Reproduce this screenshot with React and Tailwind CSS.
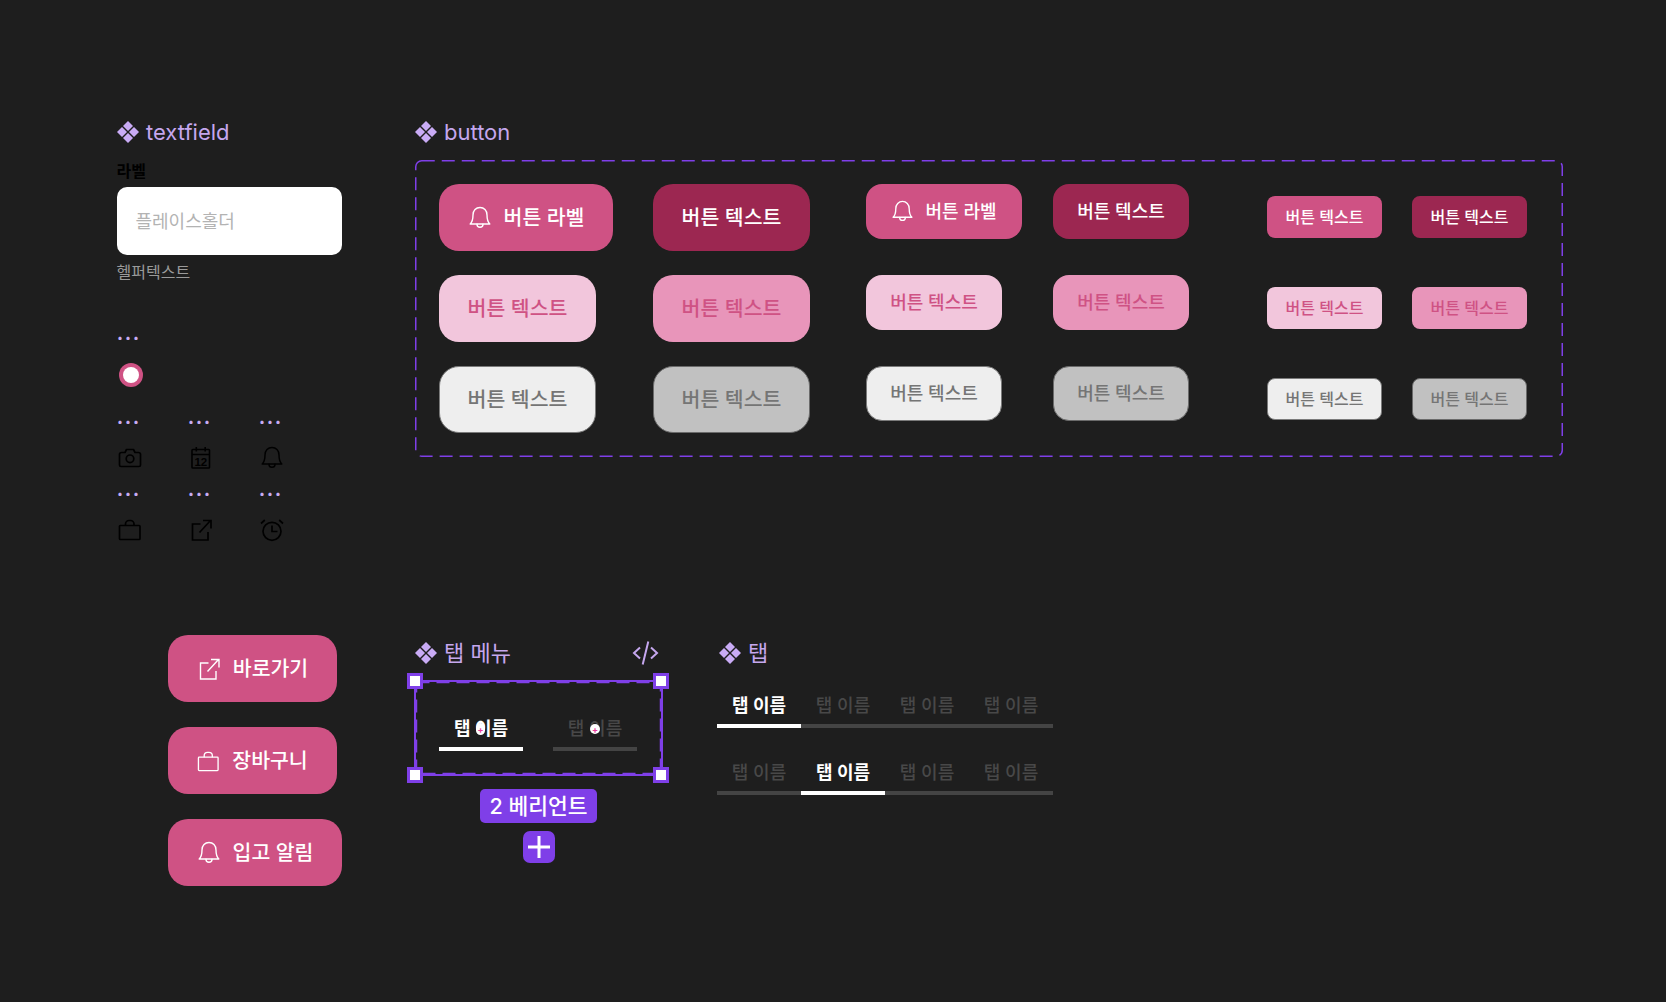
import React from 'react';

// --- Iconos ---
function Diamonds({ className }) {
  return (
    <svg viewBox="0 0 22 22" className={className} fill="currentColor">
      <path d="M11 0 16 5 11 10 6 5Z" />
      <path d="M5 6 10 11 5 16 0 11Z" />
      <path d="M17 6 22 11 17 16 12 11Z" />
      <path d="M11 12 16 17 11 22 6 17Z" />
    </svg>
  );
}

function Bell({ className, sw = 1.6 }) {
  return (
    <svg viewBox="0 0 24 24" className={className} fill="none" stroke="currentColor" strokeWidth={sw} strokeLinejoin="round" strokeLinecap="round">
      <path d="M12 1.500c-4 0-7 3-7 7.500 0 4.500-.8 7-2.800 9h19.600c-2-2-2.800-4.500-2.800-9 0-4.500-3-7.500-7-7.500Z" />
      <path d="M9 18.200c0 1.800 1.300 3.100 3 3.100s3-1.300 3-3.100" />
    </svg>
  );
}

function Camera({ className }) {
  return (
    <svg viewBox="0 0 24 24" className={className} fill="none" stroke="currentColor" strokeWidth="1.700" strokeLinejoin="round">
      <path d="M3.500 6.500H7L8.500 3.500h7L17 6.500h3.500a2 2 0 0 1 2 1.500v11a1.500 1.500 0 0 1-1.500 1.500H3a1.500 1.500 0 0 1-1.500-1.500V8a2 2 0 0 1 2-1.500Z" />
      <circle cx="12" cy="12.800" r="3.800" />
    </svg>
  );
}

function Calendar({ className }) {
  return (
    <svg viewBox="0 0 24 24" className={className} fill="none" stroke="currentColor" strokeWidth="1.600">
      <rect x="3" y="3.500" width="17.500" height="18.500" rx="0.800" />
      <path d="M3 8.500H20.500M7.300 1v4.500M16.200 1v4.500" />
      <text x="11.800" y="20" textAnchor="middle" fontSize="11.500" fontWeight="700" fontFamily="Liberation Sans, sans-serif" fill="currentColor" stroke="none">12</text>
    </svg>
  );
}

function Bag({ className, sw = 1.700 }) {
  return (
    <svg viewBox="0 0 24 24" className={className} fill="none" stroke="currentColor" strokeWidth={sw} strokeLinejoin="round">
      <rect x="1.500" y="7.500" width="20.500" height="14" rx="0.800" />
      <path d="M7.500 7.500V6a3.500 3.500 0 0 1 3.500-3.500h1.500A3.500 3.500 0 0 1 16 6v1.500" />
    </svg>
  );
}

function External({ className, sw = 1.700 }) {
  return (
    <svg viewBox="0 0 24 24" className={className} fill="none" stroke="currentColor" strokeWidth={sw}>
      <path d="M11.500 6H3.500v16h15.500v-8" />
      <path d="M10.500 14.500 21.500 2.500M14 2.500h8v8" />
    </svg>
  );
}

function Alarm({ className }) {
  return (
    <svg viewBox="0 0 24 24" className={className} fill="none" stroke="currentColor" strokeWidth="1.700">
      <circle cx="12" cy="13.300" r="9" />
      <path d="M12 7.500v6h5.500M1 5.500 4.800 2M23 5.500 19.200 2" />
    </svg>
  );
}

function CodeTag({ className }) {
  return (
    <svg viewBox="0 0 26 26" className={className} fill="none" stroke="currentColor" strokeWidth="2">
      <path d="M7.500 7.500 1.500 13l6 5.500M18.500 7.500l6 5.500-6 5.500M15.800 1.500 10.200 24.500" />
    </svg>
  );
}

// --- Encabezado de componente ---
function Title({ children, className = '' }) {
  return (
    <div className={`flex h-[26px] items-center gap-[7px] text-[22px] leading-[26px] text-[#c5a7ee] ${className}`}>
      <Diamonds className="h-[22px] w-[22px] shrink-0 text-[#c9abf5]" />
      <span>{children}</span>
    </div>
  );
}

function Dots() {
  return <div className="-ml-[1px] h-4 text-[16px] font-black leading-[7px] tracking-[2px] text-[#c9abf5]">...</div>;
}

// --- Botones ---
const variants = {
  primary: 'bg-[#cf5284] text-white',
  dark: 'bg-[#9c2751] text-white',
  soft: 'bg-[#f2c6dc] text-[#cf5284]',
  softPressed: 'bg-[#e895ba] text-[#cf5284]',
  gray: 'border border-[#7a7a7a] bg-[#eeeeee] text-[#757575]',
  grayPressed: 'border border-[#6a6a6a] bg-[#c1c1c1] text-[#757575]',
};

const sizes = {
  lg: 'h-[67px] rounded-[20px] text-[20.500px] gap-[12px] pt-[1px]',
  md: 'h-[55px] rounded-[16px] text-[18px] gap-[11px]',
  sm: 'h-[42px] rounded-[8px] text-[16px] gap-2',
};

function Btn({ v, s, w, icon, children }) {
  return (
    <div className={`flex items-center justify-center font-medium ${variants[v]} ${sizes[s]} ${w}`}>
      {icon}
      <span>{children}</span>
    </div>
  );
}

const T = '버튼 텍스트';

function ButtonGroup() {
  return (
    <div className="relative mt-[15px] flex h-[297px] w-[1148px] items-start pl-[24px] pt-[24px]">
      {/* Grande */}
      <div className="grid w-[427px] grid-cols-[214px_157px] gap-y-[24px]">
        <Btn v="primary" s="lg" w="w-[174px]" icon={<Bell className="h-6 w-6" sw={1.4} />}>버튼 라벨</Btn>
        <Btn v="dark" s="lg" w="w-[157px]">{T}</Btn>
        <Btn v="soft" s="lg" w="w-[157px]">{T}</Btn>
        <Btn v="softPressed" s="lg" w="w-[157px]">{T}</Btn>
        <Btn v="gray" s="lg" w="w-[157px]">{T}</Btn>
        <Btn v="grayPressed" s="lg" w="w-[157px]">{T}</Btn>
      </div>
      {/* Mediano */}
      <div className="grid w-[401px] grid-cols-[187px_136px] gap-y-[36px]">
        <Btn v="primary" s="md" w="w-[156px]" icon={<Bell className="h-[23px] w-[23px]" sw={1.4} />}>버튼 라벨</Btn>
        <Btn v="dark" s="md" w="w-[136px]">{T}</Btn>
        <Btn v="soft" s="md" w="w-[136px]">{T}</Btn>
        <Btn v="softPressed" s="md" w="w-[136px]">{T}</Btn>
        <Btn v="gray" s="md" w="w-[136px]">{T}</Btn>
        <Btn v="grayPressed" s="md" w="w-[136px]">{T}</Btn>
      </div>
      {/* Pequeño */}
      <div className="mt-[12px] grid grid-cols-[145px_115px] gap-y-[49px]">
        <Btn v="primary" s="sm" w="w-[115px]">{T}</Btn>
        <Btn v="dark" s="sm" w="w-[115px]">{T}</Btn>
        <Btn v="soft" s="sm" w="w-[115px]">{T}</Btn>
        <Btn v="softPressed" s="sm" w="w-[115px]">{T}</Btn>
        <Btn v="gray" s="sm" w="w-[115px]">{T}</Btn>
        <Btn v="grayPressed" s="sm" w="w-[115px]">{T}</Btn>
      </div>
      {/* Trazo discontinuo del component set */}
      <svg className="pointer-events-none absolute inset-0 h-full w-full" fill="none">
        <rect x="0.750" y="0.750" width="1146.500" height="295.500" rx="6" stroke="#7f3fe8" strokeWidth="1.500" strokeDasharray="13 7" />
      </svg>
    </div>
  );
}

// --- Pestañas ---
function Tab({ active, marker }) {
  return (
    <div className="w-[84px]">
      <div className={`relative h-6 text-center text-[18px] leading-6 ${active ? 'font-semibold text-white' : 'font-medium text-[#484848]'}`}>
        탭 이름
        {marker === 'active' && (
          <span className="absolute left-[37px] top-[6px] flex h-[12px] w-[9px] items-center justify-center rounded-full bg-white text-[9px] font-bold leading-none text-[#e8399a]">+</span>
        )}
        {marker === 'idle' && (
          <span className="absolute left-[37px] top-[7px] flex h-[10px] w-[10px] items-center justify-center rounded-full bg-white text-[9px] font-bold leading-none text-[#e8399a]">+</span>
        )}
      </div>
    </div>
  );
}

function Bar({ active }) {
  return <div className={`h-[4px] w-[84px] ${active ? 'bg-white' : 'bg-[#444444]'}`} />;
}

function TabRow({ activeIndex, className }) {
  return (
    <div className={className}>
      <div className="flex">
        {[0, 1, 2, 3].map((i) => <Tab key={i} active={i === activeIndex} />)}
      </div>
      <div className="mt-[6px] flex">
        {[0, 1, 2, 3].map((i) => <Bar key={i} active={i === activeIndex} />)}
      </div>
    </div>
  );
}

function Handle({ className }) {
  return <div className={`absolute h-4 w-4 border-[3px] border-[#7f3fe8] bg-white ${className}`} />;
}

export default function App() {
  const iconClass = 'h-6 w-6 text-black';
  const iconSet = [
    <Camera key="camera" className={iconClass} />,
    <Calendar key="calendar" className={iconClass} />,
    <Bell key="bell" className={iconClass} sw={1.500} />,
    <Bag key="bag" className={iconClass} />,
    <External key="external" className={iconClass} />,
    <Alarm key="alarm" className={iconClass} />,
  ];

  return (
    <div className="relative h-[1002px] w-full overflow-hidden bg-[#1e1e1e] font-['Inter','Noto_Sans_CJK_KR',sans-serif]">
      {/* textfield */}
      <div className="absolute left-[116.500px] top-[119px] w-[225.500px]">
        <Title className="ml-[0.500px]">textfield</Title>
        <div className="mt-[16px] h-5 text-[16px] font-bold leading-5 text-black">라벨</div>
        <div className="mt-[6px] flex h-[68px] items-center rounded-[10px] bg-white pl-[19px] text-[18px] text-[#b3b3b3]">
          플레이스홀더
        </div>
        <div className="mt-[7px] h-5 text-[16px] leading-5 text-[#9a9a9a]">헬퍼텍스트</div>

        <div className="mt-[49px] pl-[1.500px]">
          <Dots />
          <div className="ml-[1px] mt-[16px] flex h-6 w-6 items-center justify-center rounded-full bg-[#cf5284]">
            <div className="h-4 w-4 rounded-full bg-white" />
          </div>
          <div className="mt-[28px] grid grid-cols-[71px_71px_70px] gap-y-[17px]">
            {iconSet.map((icon) => (
              <div key={icon.key}>
                <Dots />
                <div className="mt-[15px]">{icon}</div>
              </div>
            ))}
          </div>
        </div>
      </div>

      {/* button */}
      <div className="absolute left-[415px] top-[119px]">
        <Title>button</Title>
        <ButtonGroup />
      </div>

      {/* botones con icono */}
      <div className="absolute left-[168px] top-[635px] flex flex-col items-start gap-[25px]">
        <Btn v="primary" s="lg" w="w-[169px]" icon={<External className="h-6 w-6" sw={1.400} />}>바로가기</Btn>
        <Btn v="primary" s="lg" w="w-[169px]" icon={<Bag className="h-[23px] w-[23px]" sw={1.400} />}>장바구니</Btn>
        <Btn v="primary" s="lg" w="w-[174px]" icon={<Bell className="h-6 w-6" sw={1.400} />}>입고 알림</Btn>
      </div>

      {/* 탭 메뉴 */}
      <div className="absolute left-[414px] top-[640px] flex w-[249px] flex-col items-center">
        <div className="flex w-full items-center justify-between pr-[4px] pl-[1px]">
          <Title>탭 메뉴</Title>
          <CodeTag className="h-[26px] w-[27px] text-[#c5a7ee]" />
        </div>
        <div className="relative mt-[14px] h-[96px] w-[249px] border-2 border-[#7f3fe8] pl-[23px] pt-[35px]">
          <div className="flex gap-[30px]">
            <div>
              <Tab active marker="active" />
              <div className="mt-[6px]"><Bar active /></div>
            </div>
            <div>
              <Tab marker="idle" />
              <div className="mt-[6px]"><Bar /></div>
            </div>
          </div>
          <svg className="pointer-events-none absolute inset-0 h-full w-full" fill="none">
            <rect x="0.500" y="0.500" width="244" height="91" stroke="#7f3fe8" strokeWidth="1.500" strokeDasharray="13 7" />
          </svg>
          <Handle className="-left-[9px] -top-[9px]" />
          <Handle className="-right-[8px] -top-[9px]" />
          <Handle className="-bottom-[9px] -left-[9px]" />
          <Handle className="-bottom-[9px] -right-[8px]" />
        </div>
        <div className="mt-[13px] flex h-[34px] w-[117px] items-center justify-center rounded-[5px] bg-[#7f3fe8] text-[21.500px] font-medium text-white">
          2 베리언트
        </div>
        <div className="mt-[8px] flex h-8 w-8 items-center justify-center rounded-[7px] bg-[#7f3fe8]">
          <svg viewBox="0 0 24 24" className="h-6 w-6" fill="none" stroke="white" strokeWidth="3"><path d="M12 1v22M1 12h22" /></svg>
        </div>
      </div>

      {/* 탭 */}
      <div className="absolute left-[717px] top-[640px] w-[336px]">
        <Title className="pl-[2px]">탭</Title>
        <TabRow activeIndex={0} className="mt-[27.500px]" />
        <TabRow activeIndex={1} className="mt-[33.500px]" />
      </div>
    </div>
  );
}
